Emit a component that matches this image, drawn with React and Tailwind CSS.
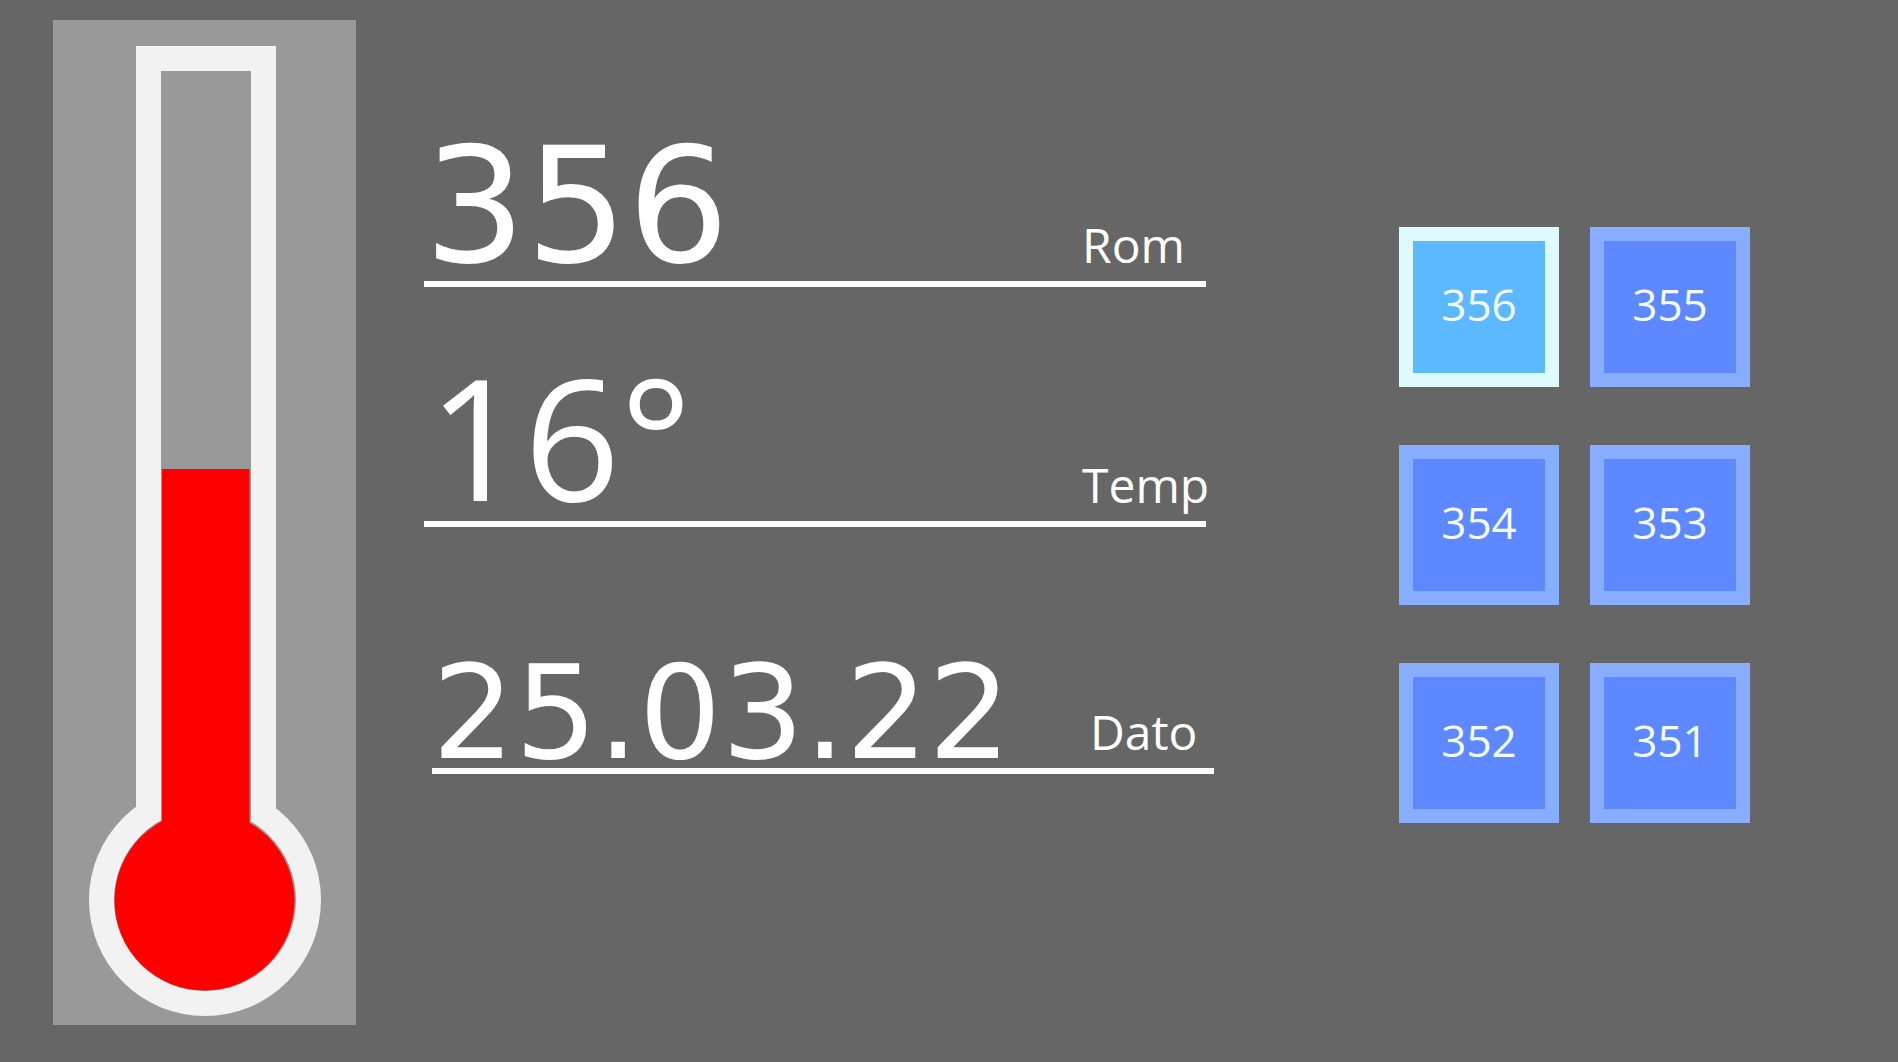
import { useState } from "react";

const rooms = ["356", "355", "354", "353", "352", "351"];

function Thermometer() {
  return (
    <svg
      viewBox="0 0 303 1005"
      className="block w-full"
      role="img"
      aria-label="16°"
    >
      <rect x="83" y="26" width="140" height="800" fill="#f2f2f2" />
      <circle cx="152" cy="880" r="116" fill="#f2f2f2" />
      <rect x="108" y="51" width="90" height="780" fill="#999999" />
      <circle cx="152" cy="880" r="91" fill="#999999" />
      <rect x="109" y="449" width="87.5" height="400" fill="#ff0000" />
      <circle cx="151.5" cy="880.5" r="90" fill="#ff0000" />
    </svg>
  );
}

function Reading({ label, value, valueClass, rowClass = "" }) {
  return (
    <div
      className={`flex items-end justify-between border-b-6 border-white ${rowClass}`}
    >
      <dd className={`order-1 whitespace-nowrap ${valueClass}`}>{value}</dd>
      <dt className="order-2 mb-3 w-[124px] whitespace-nowrap text-5xl leading-none">
        {label}
      </dt>
    </div>
  );
}

function RoomButton({ room, selected, onSelect }) {
  const colors = selected
    ? "border-[#dffaff] bg-[#5cb8ff]"
    : "border-[#88adff] bg-[#5d88ff]";
  return (
    <button
      type="button"
      aria-pressed={selected}
      onClick={() => onSelect(room)}
      className={`flex size-40 items-center justify-center border-14 pb-1.5 text-[44px] leading-none text-[#f4fcff] ${colors}`}
    >
      {room}
    </button>
  );
}

export default function App() {
  const [room, setRoom] = useState("356");

  return (
    <main className="flex min-h-screen bg-[#666666] pr-[148px] pl-[53px] font-['Open_Sans',sans-serif] text-white">
      <section className="mt-5 mb-[37px] w-[303px] shrink-0 bg-[#999999]">
        <Thermometer />
      </section>

      <dl className="mr-[193px] ml-[68px] flex-1 pt-[138px]">
        <Reading
          label="Rom"
          value={room}
          valueClass="mb-[5px] font-['DejaVu_Sans',sans-serif] text-[160px] leading-[138px]"
        />
        <Reading
          label="Temp"
          value="16°"
          rowClass="mt-[69px]"
          valueClass="mb-[5px] pl-1 text-[168px] leading-[160px]"
        />
        <Reading
          label="Dato"
          value="25.03.22"
          rowClass="mt-[132px] -mr-2 ml-2"
          valueClass="mb-px font-['DejaVu_Sans',sans-serif] text-[130px] leading-[108px]"
        />
      </dl>

      <nav
        aria-label="Rom"
        className="mt-[227px] grid shrink-0 grid-cols-2 content-start gap-x-[31px] gap-y-[58px]"
      >
        {rooms.map((r) => (
          <RoomButton
            key={r}
            room={r}
            selected={r === room}
            onSelect={setRoom}
          />
        ))}
      </nav>
    </main>
  );
}
